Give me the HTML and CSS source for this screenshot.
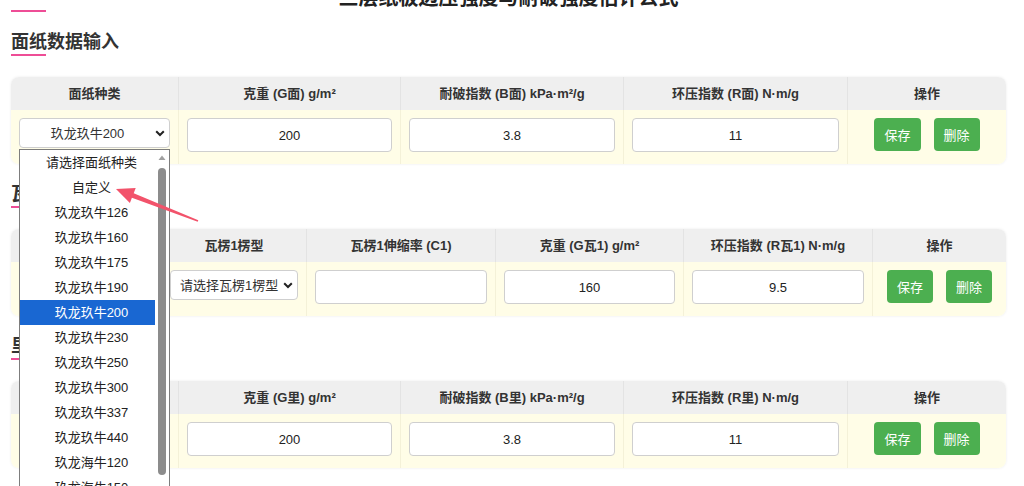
FILE: index.html
```html
<!DOCTYPE html>
<html lang="zh-CN">
<head>
<meta charset="utf-8">
<title>三层纸板边压强度与耐破强度估计公式</title>
<link rel="stylesheet" href="styles.css">
</head>
<body>
<div class="page">
  <h1 class="title">三层纸板边压强度与耐破强度估计公式</h1>
  <div class="title-rule"></div>

  <section class="block">
    <h2 class="block-title">面纸数据输入</h2>
    <table class="grid">
      <colgroup>
        <col class="w-168"><col class="w-222"><col class="w-223"><col class="w-224"><col class="w-158">
      </colgroup>
      <thead>
        <tr><th>面纸种类</th><th>克重 (G面) g/m²</th><th>耐破指数 (B面) kPa·m²/g</th><th>环压指数 (R面) N·m/g</th><th>操作</th></tr>
      </thead>
      <tbody>
        <tr>
          <td>
            <div class="select-wrap">
              <select class="sel"><option>玖龙玖牛200</option></select>
              <svg class="chev" width="10" height="7" viewBox="0 0 10 7"><polyline points="1.2,1.2 5,5 8.8,1.2" fill="none" stroke="#222" stroke-width="2"/></svg>
              <div class="dropdown">
                <ul class="dd-list">
                  <li>请选择面纸种类</li>
                  <li>自定义</li>
                  <li>玖龙玖牛126</li>
                  <li>玖龙玖牛160</li>
                  <li>玖龙玖牛175</li>
                  <li>玖龙玖牛190</li>
                  <li class="active">玖龙玖牛200</li>
                  <li>玖龙玖牛230</li>
                  <li>玖龙玖牛250</li>
                  <li>玖龙玖牛300</li>
                  <li>玖龙玖牛337</li>
                  <li>玖龙玖牛440</li>
                  <li>玖龙海牛120</li>
                  <li>玖龙海牛150</li>
                </ul>
                <div class="dd-scroll">
                  <svg class="dd-up" width="14" height="18" viewBox="0 0 14 18"><polygon points="3.5,10 7,5.5 10.5,10" fill="#a0a0a0"/></svg>
                  <div class="dd-thumb"></div>
                </div>
              </div>
            </div>
          </td>
          <td><input class="field" value="200"></td>
          <td><input class="field" value="3.8"></td>
          <td><input class="field" value="11"></td>
          <td><div class="ops"><button class="btn">保存</button><button class="btn">删除</button></div></td>
        </tr>
      </tbody>
    </table>
  </section>

  <section class="block">
    <h2 class="block-title">瓦楞1数据输入</h2>
    <table class="grid">
      <colgroup>
        <col class="w-151"><col class="w-145"><col class="w-189"><col class="w-188"><col class="w-189"><col class="w-133">
      </colgroup>
      <thead>
        <tr><th>瓦楞1种类</th><th>瓦楞1楞型</th><th>瓦楞1伸缩率 (C1)</th><th>克重 (G瓦1) g/m²</th><th>环压指数 (R瓦1) N·m/g</th><th>操作</th></tr>
      </thead>
      <tbody>
        <tr>
          <td>
            <div class="select-wrap">
              <select class="sel"><option>玖龙瓦纸160</option></select>
              <svg class="chev" width="10" height="7" viewBox="0 0 10 7"><polyline points="1.2,1.2 5,5 8.8,1.2" fill="none" stroke="#222" stroke-width="2"/></svg>
            </div>
          </td>
          <td>
            <div class="select-wrap">
              <select class="sel sel-left"><option>请选择瓦楞1楞型</option></select>
              <svg class="chev" width="10" height="7" viewBox="0 0 10 7"><polyline points="1.2,1.2 5,5 8.8,1.2" fill="none" stroke="#222" stroke-width="2"/></svg>
            </div>
          </td>
          <td><input class="field" value=""></td>
          <td><input class="field" value="160"></td>
          <td><input class="field" value="9.5"></td>
          <td><div class="ops"><button class="btn">保存</button><button class="btn">删除</button></div></td>
        </tr>
      </tbody>
    </table>
  </section>

  <section class="block">
    <h2 class="block-title">里纸数据输入</h2>
    <table class="grid">
      <colgroup>
        <col class="w-168"><col class="w-222"><col class="w-223"><col class="w-224"><col class="w-158">
      </colgroup>
      <thead>
        <tr><th>里纸种类</th><th>克重 (G里) g/m²</th><th>耐破指数 (B里) kPa·m²/g</th><th>环压指数 (R里) N·m/g</th><th>操作</th></tr>
      </thead>
      <tbody>
        <tr>
          <td>
            <div class="select-wrap">
              <select class="sel"><option>玖龙玖牛200</option></select>
              <svg class="chev" width="10" height="7" viewBox="0 0 10 7"><polyline points="1.2,1.2 5,5 8.8,1.2" fill="none" stroke="#222" stroke-width="2"/></svg>
            </div>
          </td>
          <td><input class="field" value="200"></td>
          <td><input class="field" value="3.8"></td>
          <td><input class="field" value="11"></td>
          <td><div class="ops"><button class="btn">保存</button><button class="btn">删除</button></div></td>
        </tr>
      </tbody>
    </table>
  </section>
</div>

<svg class="callout" width="1024" height="486" viewBox="0 0 1024 486">
  <polygon points="116,189 135.7,188 133.7,193.2 198.3,220.3 197.7,221.7 131.9,197.8 129.9,203" fill="#f2536b"/>
</svg>
</body>
</html>
```

FILE: styles.css
```css
html {
  overflow: hidden;
}

body {
  margin: 0;
  background: #fff;
  color: #333;
  font-family: "Liberation Sans", "Noto Sans CJK SC", sans-serif;
}

.page {
  padding: 0 18px 40px 11px;
}

.title {
  margin: -14px 0 0;
  font-size: 20px;
  line-height: 24px;
  font-weight: bold;
  color: #222;
  text-align: center;
}

.title-rule {
  width: 35px;
  height: 2px;
  background: #ee4d96;
}

.block {
  margin-top: 18px;
}

.block-title {
  margin: 0;
  font-size: 18px;
  line-height: 24px;
  font-weight: bold;
  color: #333;
}

.block-title::after {
  content: "";
  display: block;
  width: 35px;
  height: 2px;
  background: #ee4d96;
}

.grid {
  width: 100%;
  margin-top: 21px;
  table-layout: fixed;
  border-collapse: separate;
  border-spacing: 0;
  border-radius: 8px;
  box-shadow: 0 0 3px rgba(0, 0, 0, 0.08);
}

.w-168 { width: 168px; }
.w-222 { width: 222px; }
.w-223 { width: 223px; }
.w-224 { width: 224px; }
.w-158 { width: 158px; }
.w-151 { width: 151px; }
.w-145 { width: 145px; }
.w-189 { width: 189px; }
.w-188 { width: 188px; }
.w-133 { width: 133px; }

.grid th {
  height: 33px;
  padding: 0 6px;
  background: #efefef;
  border-right: 1px solid #e3e3e3;
  font-size: 13px;
  line-height: 17px;
  font-weight: bold;
  color: #333;
  text-align: center;
  vertical-align: middle;
  white-space: nowrap;
}

.grid td {
  padding: 8px 8px 12px;
  background: #fffde7;
  border-right: 1px solid #f4f1d8;
  vertical-align: top;
}

.grid th:last-child,
.grid td:last-child {
  border-right: none;
}

.grid th:first-child { border-top-left-radius: 8px; }
.grid th:last-child { border-top-right-radius: 8px; }
.grid td:first-child { border-bottom-left-radius: 8px; }
.grid td:last-child { border-bottom-right-radius: 8px; }

.field {
  display: block;
  width: 100%;
  height: 34px;
  box-sizing: border-box;
  margin: 0;
  padding: 0 6px;
  border: 1px solid #cfcfcf;
  border-radius: 4px;
  background: #fff;
  font-family: inherit;
  font-size: 13px;
  color: #222;
  text-align: center;
}

.select-wrap {
  position: relative;
}

.sel {
  display: block;
  width: 100%;
  height: 30px;
  box-sizing: border-box;
  margin: 0;
  padding: 0 20px 0 6px;
  border: 1px solid #cfcfcf;
  border-radius: 4px;
  background: #fff;
  font-family: inherit;
  font-size: 13px;
  color: #333;
  text-align: center;
  text-align-last: center;
  -webkit-appearance: none;
  appearance: none;
}

.sel-left {
  padding: 0 14px 0 9px;
  text-align: left;
  text-align-last: left;
}

.chev {
  position: absolute;
  right: 5px;
  top: 12px;
  pointer-events: none;
}

.dropdown {
  position: absolute;
  left: 0;
  top: 31px;
  z-index: 10;
  display: flex;
  width: 151px;
  height: 345px;
  box-sizing: border-box;
  border: 1px solid #7d7d7d;
  background: #fff;
}

.dd-list {
  flex: 1;
  margin: 0;
  padding: 0;
  list-style: none;
}

.dd-list li {
  height: 25px;
  padding-left: 8px;
  font-size: 13px;
  line-height: 25px;
  color: #222;
  text-align: center;
  white-space: nowrap;
}

.dd-list li.active {
  background: #1967d2;
  color: #fff;
}

.dd-scroll {
  display: flex;
  flex-direction: column;
  width: 14px;
}

.dd-up {
  display: block;
}

.dd-thumb {
  width: 8px;
  height: 307px;
  margin-left: 3px;
  border-radius: 4px;
  background: #8c8c8c;
}

.ops {
  display: flex;
  justify-content: center;
  gap: 13px;
}

.btn {
  height: 33px;
  margin: 0;
  padding: 0 10px;
  border: none;
  border-radius: 4px;
  background: #4caf50;
  color: #fff;
  font-family: inherit;
  font-size: 13px;
}

.callout {
  position: absolute;
  left: 0;
  top: 0;
  z-index: 20;
  pointer-events: none;
}
```
